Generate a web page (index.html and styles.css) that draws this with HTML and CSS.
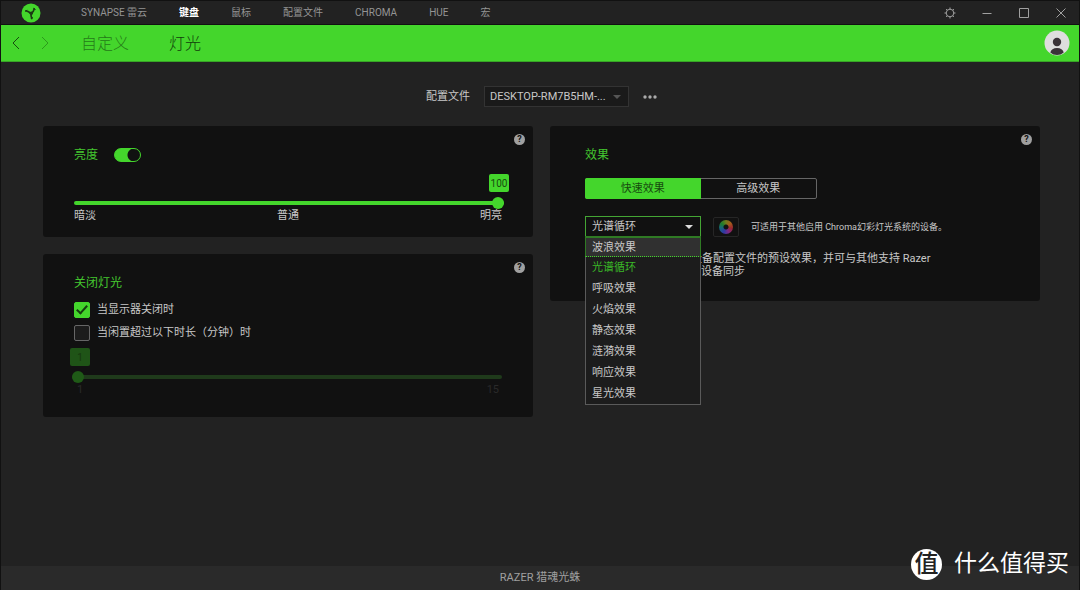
FILE: index.html
```html
<!DOCTYPE html>
<html lang="zh-CN">
<head>
<meta charset="utf-8">
<title>RAZER 猎魂光蛛</title>
<link rel="stylesheet" href="styles.css">
</head>
<body>
<div class="window">
  <header class="topbar">
    <svg class="logo" viewBox="0 0 20 20" aria-hidden="true">
      <circle cx="10" cy="10" r="9.500" fill="#44d62c"/>
      <path d="M10 10.500Q7.500 8.500 5 7.800M10 10.500Q12.800 8.800 13.200 5.800M10 10.500Q9.800 13 10.800 15.500" fill="none" stroke="#1b3a14" stroke-width="1.700" stroke-linecap="round"/>
      <path d="M4 8.400L6.200 7.200M12.300 5.200L14.600 6.600M9.800 15.300L12 14.600" stroke="#1b3a14" stroke-width="1"/>
      <circle cx="10.300" cy="10.300" r="1.700" fill="#1b3a14"/>
    </svg>
    <nav class="tabs">
      <a href="#synapse">SYNAPSE 雷云</a>
      <a href="#keyboard" class="active">键盘</a>
      <a href="#mouse">鼠标</a>
      <a href="#profiles">配置文件</a>
      <a href="#chroma">CHROMA</a>
      <a href="#hue">HUE</a>
      <a href="#macro">宏</a>
    </nav>
    <div class="window-buttons">
      <button type="button" aria-label="设置"><svg viewBox="0 0 14 14"><circle cx="7" cy="7" r="3.800"/><path d="M7 1.500v1.700M7 10.800v1.700M1.500 7h1.700M10.800 7h1.700M3.100 3.100l1.200 1.200M9.700 9.700l1.200 1.200M3.100 10.900l1.200-1.200M9.700 4.300l1.200-1.200"/></svg></button>
      <button type="button" aria-label="最小化"><svg viewBox="0 0 14 14"><path d="M2.500 7.500h9"/></svg></button>
      <button type="button" aria-label="最大化"><svg viewBox="0 0 14 14"><path d="M2.500 2.500h9v9h-9z"/></svg></button>
      <button type="button" aria-label="关闭"><svg viewBox="0 0 14 14"><path d="M2.500 2.500l9 9M11.500 2.500l-9 9"/></svg></button>
    </div>
  </header>

  <div class="subbar">
    <div class="history">
      <button type="button" aria-label="后退"><svg viewBox="0 0 10 14"><path d="M8 1L2 7l6 6"/></svg></button>
      <button type="button" aria-label="前进" disabled><svg viewBox="0 0 10 14"><path d="M2 1l6 6-6 6"/></svg></button>
    </div>
    <nav class="subtabs">
      <a href="#customize">自定义</a>
      <a href="#lighting" class="active">灯光</a>
    </nav>
    <button type="button" class="avatar" aria-label="账户">
      <svg viewBox="0 0 26 26"><circle cx="13" cy="13" r="12.500" fill="#dedede"/><circle cx="13" cy="12" r="4.200" fill="#3a3338"/><path d="M6.300 22.500Q7.500 18 13 18t6.700 4.500Q17 25 13 25t-6.700-2.500z" fill="#3a3338"/></svg>
    </button>
  </div>

  <main class="content">
    <div class="profile-row">
      <label for="profile">配置文件</label>
      <div class="select-box profile-box">
        <select id="profile"><option>DESKTOP-RM7B5HM-...</option></select>
      </div>
      <button type="button" class="more" aria-label="更多"><svg viewBox="0 0 14 4"><circle cx="2" cy="2" r="1.700"/><circle cx="7" cy="2" r="1.700"/><circle cx="12" cy="2" r="1.700"/></svg></button>
    </div>

    <div class="columns">
      <div class="column">
        <section class="card">
          <button type="button" class="help" aria-label="亮度帮助">?</button>
          <div class="title-row">
            <h2 id="brightness-title">亮度</h2>
            <input type="checkbox" class="switch" aria-label="亮度开关" checked>
          </div>
          <div class="slider brightness">
            <output for="brightness" class="bubble bubble-end">100</output>
            <input type="range" id="brightness" aria-labelledby="brightness-title" min="0" max="100" value="100">
            <div class="scale"><span>暗淡</span><span>普通</span><span>明亮</span></div>
          </div>
        </section>

        <section class="card switch-off">
          <button type="button" class="help" aria-label="关闭灯光帮助">?</button>
          <h2>关闭灯光</h2>
          <label class="check"><input type="checkbox" checked><span>当显示器关闭时</span></label>
          <label class="check"><input type="checkbox"><span id="idle-label">当闲置超过以下时长（分钟）时</span></label>
          <div class="slider idle">
            <output for="idle" class="bubble">1</output>
            <input type="range" id="idle" aria-labelledby="idle-label" min="1" max="15" value="1" disabled>
            <div class="scale"><span>1</span><span>15</span></div>
          </div>
        </section>
      </div>

      <div class="column">
        <section class="card effects">
          <button type="button" class="help" aria-label="效果帮助">?</button>
          <h2 id="effects-title">效果</h2>
          <div class="segmented">
            <button type="button" class="selected">快速效果</button>
            <button type="button">高级效果</button>
          </div>
          <div class="effect-row">
            <div class="effect-picker">
              <div class="select-box effect-box">
                <select id="effect" aria-labelledby="effects-title"><option>光谱循环</option></select>
              </div>
              <ul class="menu" role="listbox" aria-labelledby="effects-title">
                <li role="option" class="hovered">波浪效果</li>
                <li role="option" class="current" aria-selected="true">光谱循环</li>
                <li role="option">呼吸效果</li>
                <li role="option">火焰效果</li>
                <li role="option">静态效果</li>
                <li role="option">涟漪效果</li>
                <li role="option">响应效果</li>
                <li role="option">星光效果</li>
              </ul>
            </div>
            <button type="button" class="chroma" aria-label="Chroma"><span class="wheel"></span></button>
            <p class="note">可适用于其他启用 Chroma幻彩灯光系统的设备。</p>
          </div>
          <p class="description">设备配置文件的预设效果，并可与其他支持 Razer<br>设备同步</p>
        </section>
      </div>
    </div>
  </main>

  <footer class="footer">RAZER 猎魂光蛛</footer>
  <div class="watermark"><span class="seal">值</span><span>什么值得买</span></div>
</div>
</body>
</html>
```
FILE: styles.css
```css
*,
*::before,
*::after {
  box-sizing: border-box;
}

body {
  margin: 0;
  background: #222;
  color: #c8c8c8;
  font: 11px/16px Roboto, "Noto Sans CJK SC", sans-serif;
}

button,
select,
input {
  margin: 0;
  padding: 0;
  border: 0;
  background: none;
  color: inherit;
  font: inherit;
}

h2,
p,
ul {
  margin: 0;
  padding: 0;
  font-weight: 400;
}

a {
  color: inherit;
  text-decoration: none;
}

svg {
  display: block;
}

.window {
  position: relative;
  display: flex;
  flex-direction: column;
  min-height: 100vh;
  border: 1px solid #111;
  border-bottom: 0;
}

.topbar {
  display: flex;
  align-items: center;
  height: 24px;
  padding: 0 11px 0 20px;
  border-bottom: 1px solid #111;
}

.logo {
  width: 20px;
  height: 20px;
}

.tabs {
  display: flex;
  flex: 1;
  gap: 32px;
  margin-left: 40px;
  padding-top: 1px;
  color: #949494;
  font-size: 10px;
}

.tabs .active {
  color: #fff;
  font-weight: 700;
}

.window-buttons {
  display: flex;
  gap: 23px;
}

.window-buttons svg {
  width: 14px;
  height: 14px;
  fill: none;
  stroke: #a0a0a0;
}

.subbar {
  display: flex;
  align-items: center;
  height: 37px;
  padding: 0 9px 0 10px;
  border-bottom: 1px solid #38a526;
  background: #44d62c;
}

.history {
  display: flex;
  gap: 19px;
}

.history svg {
  width: 10px;
  height: 14px;
  fill: none;
  stroke: #174b0f;
}

.history :disabled svg {
  stroke: #2d9a1c;
}

.subtabs {
  display: flex;
  flex: 1;
  gap: 40px;
  margin-left: 31px;
  padding-top: 2px;
  color: #257a18;
  font-size: 16px;
  line-height: 24px;
  font-weight: 300;
}

.subtabs .active {
  color: #123d0b;
}

.avatar svg {
  width: 26px;
  height: 26px;
}

.content {
  flex: 1;
  padding: 24px 39px 24px 42px;
}

.profile-row {
  display: flex;
  align-items: center;
  justify-content: center;
  gap: 14px;
  margin-bottom: 19px;
}

.select-box {
  position: relative;
  border: 1px solid #333;
  background: #1a1a1a;
}

.select-box::after {
  content: "";
  position: absolute;
  top: 8px;
  right: 7px;
  border: 4px solid transparent;
  border-top-color: #555;
  border-bottom: 0;
  pointer-events: none;
}

.select-box select {
  display: block;
  width: 100%;
  height: 19px;
  padding-left: 6px;
  appearance: none;
}

.profile-box {
  width: 145px;
}

.profile-box select {
  padding-left: 5px;
}

.more svg {
  width: 14px;
  height: 4px;
  fill: #aaa;
}

.columns {
  display: grid;
  grid-template-columns: 1fr 1fr;
  align-items: start;
  gap: 17px;
}

.column {
  display: grid;
  gap: 17px;
}

.card {
  position: relative;
  padding: 20px 31px 14px;
  border-radius: 3px;
  background: #111;
}

.card h2 {
  color: #44c72f;
  font-size: 12px;
  line-height: 18px;
}

.help {
  position: absolute;
  top: 8px;
  right: 8px;
  width: 11px;
  height: 11px;
  border-radius: 50%;
  background: #a0a0a0;
  color: #111;
  font-size: 9px;
  line-height: 11px;
  font-weight: 700;
}

.title-row {
  display: flex;
  align-items: center;
  gap: 16px;
}

.switch {
  width: 27px;
  height: 14px;
  border: 1px solid #44d62c;
  border-radius: 7px;
  background: radial-gradient(circle at 19px 6px, #111 6px, #44d62c 7px);
  appearance: none;
}

.slider {
  display: flex;
  flex-direction: column;
}

.brightness {
  margin-top: 10px;
  margin-right: -2px;
}

.bubble {
  align-self: flex-start;
  width: 20px;
  height: 18px;
  border-radius: 2px;
  background: #44d62c;
  color: #174b0f;
  font-size: 10px;
  line-height: 19px;
  text-align: center;
}

.bubble-end {
  align-self: flex-end;
  margin-right: -5px;
}

.slider input {
  width: 100%;
  height: 12px;
  appearance: none;
}

.brightness input {
  margin-top: 5px;
}

.slider input::-webkit-slider-runnable-track {
  height: 4px;
  border-radius: 2px;
  background: #44d62c;
}

.slider input::-webkit-slider-thumb {
  width: 12px;
  height: 12px;
  margin-top: -4px;
  border-radius: 50%;
  background: #44d62c;
  appearance: none;
}

.scale {
  display: flex;
  justify-content: space-between;
  line-height: 14px;
  padding-right: 2px;
}

.switch-off {
  padding-bottom: 20px;
}

.switch-off h2 {
  margin-bottom: 10px;
}

.check {
  display: flex;
  align-items: center;
  gap: 7px;
  height: 16px;
  margin-bottom: 7px;
}

.check input {
  width: 16px;
  height: 16px;
  border: 1px solid #666;
  border-radius: 2px;
  background: #1c1c1c;
  appearance: none;
}

.check input:checked {
  display: grid;
  place-items: center;
  border-color: #44d62c;
  background: #44d62c;
}

.check input:checked::after {
  content: "";
  width: 6px;
  height: 11px;
  margin-bottom: 3px;
  border: solid #163d10;
  border-width: 0 2px 2px 0;
  transform: rotate(42deg);
}

.idle {
  margin-left: -2px;
}

.idle .bubble {
  margin-left: -2px;
  background: #1f5417;
  color: #17380f;
}

.idle input {
  margin-top: 5px;
}

.idle input::-webkit-slider-runnable-track {
  background: #1f3a1b;
}

.idle input::-webkit-slider-thumb {
  background: #1f5a17;
}

.idle .scale {
  padding: 0 3px 0 5px;
  color: #2a2a2a;
}

.effects {
  padding: 20px 35px 23px;
}

.segmented {
  display: flex;
  width: 232px;
  height: 21px;
  margin-top: 14px;
  border: 1px solid #666;
  border-radius: 2px;
}

.segmented button {
  flex: 1;
}

.segmented .selected {
  margin: -1px 0 -1px -1px;
  border-radius: 2px 0 0 2px;
  background: #44d62c;
  color: #174b0f;
}

.effect-row {
  display: flex;
  align-items: center;
  margin-top: 17px;
}

.effect-picker {
  position: relative;
  width: 116px;
}

.effect-box {
  border-color: #44a534;
  background: #111;
}

.effect-box::after {
  border-top-color: #ddd;
}

.menu {
  position: absolute;
  z-index: 1;
  top: calc(100% - 1px);
  left: 0;
  right: 0;
  border: 1px solid #5a5a5a;
  border-top: 0;
  background: #1c1c1c;
  list-style: none;
  line-height: 21px;
}

.menu li {
  height: 21px;
  padding-left: 6px;
}

.menu .hovered {
  margin: 0 -1px;
  border: 1px solid #2f7a24;
  border-top-width: 2px;
  border-bottom: 1px dotted #44d62c;
  background: #303030;
  line-height: 19px;
}

.menu .current {
  color: #3ab827;
}

.chroma {
  display: grid;
  place-items: center;
  width: 26px;
  height: 20px;
  margin-left: 12px;
  border: 1px solid #262626;
  border-radius: 2px;
}

.wheel {
  width: 14px;
  height: 14px;
  border-radius: 50%;
  background: radial-gradient(circle, #111 2px, transparent 3px), conic-gradient(#6f7a1c, #a35a1c, #9c2630, #7a2888, #2c3aa3, #17647c, #1d7d2c, #6f7a1c);
}

.note {
  margin-left: 12px;
  font-size: 9px;
}

.description {
  margin-top: 15px;
  padding-left: 116px;
  line-height: 13px;
  text-indent: -10px;
}

.footer {
  height: 24px;
  background: #2a2a2a;
  color: #a0a0a0;
  line-height: 24px;
  text-align: center;
}

.watermark {
  position: absolute;
  right: 10px;
  bottom: 10px;
  display: flex;
  align-items: center;
  gap: 12px;
  color: #fff;
  font-size: 23px;
  line-height: 32px;
}

.seal {
  width: 31px;
  height: 31px;
  border-radius: 50%;
  background: #fff;
  color: #222;
  font-size: 24px;
  line-height: 30px;
  font-weight: 500;
  text-align: center;
}
```
